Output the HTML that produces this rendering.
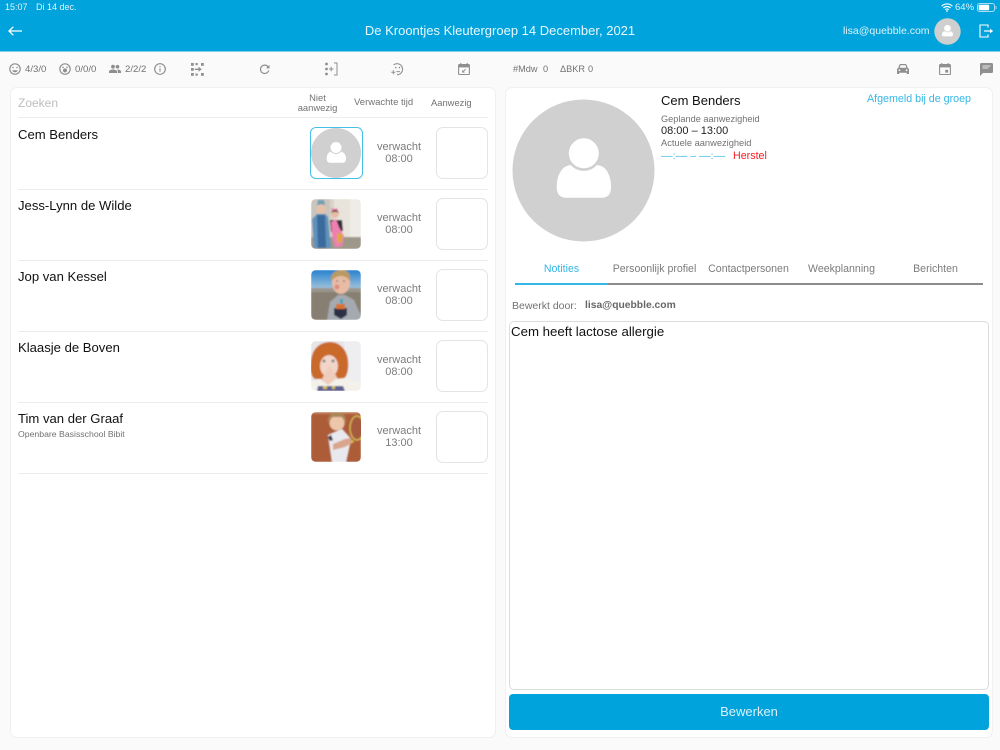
<!DOCTYPE html>
<html lang="nl"><head><meta charset="utf-8"><title>De Kroontjes Kleutergroep</title>
<style>
*{box-sizing:border-box}
html,body{margin:0;padding:0}
body{width:1000px;height:750px;position:relative;overflow:hidden;background:#fafafa;font-family:"Liberation Sans",sans-serif;color:#111}
.a{position:absolute;white-space:nowrap;line-height:1}
.g{color:#727272}
svg{position:absolute;display:block}
.card{position:absolute;background:#fff;border:1px solid #f0f0f0;border-radius:7px}
.line{position:absolute;left:18px;width:470px;height:1px;background:#ececec}
.box{position:absolute;left:436px;width:52px;height:52px;border:1.5px solid #e4e4e4;border-radius:7px;background:#fff}
.name{position:absolute;left:18px;font-size:13.1px;line-height:1;color:#111;white-space:nowrap}
.time{position:absolute;left:370px;width:58px;text-align:center;font-size:11px;line-height:12px;color:#7c7c7c}
.tab{position:absolute;top:263px;font-size:10.6px;line-height:12px;color:#7c7c7c;text-align:center;white-space:nowrap}
.ic{fill:none;stroke:#8f8f8f;stroke-width:1.2}
.s{font-size:9.6px;top:64.500px}
</style></head><body>

<div style="position:absolute;left:0;top:0;width:1000px;height:51px;background:#00a3dc"></div>
<div style="position:absolute;left:0;top:51px;width:1000px;height:1px;background:#7fd0ee"></div>
<div class="a" style="left:5px;top:3px;font-size:9px;color:#e2f4fb">15:07</div>
<div class="a" style="left:36px;top:3px;font-size:9px;color:#e2f4fb">Di 14 dec.</div>
<svg style="left:941px;top:3px" width="12" height="9" viewBox="0 0 12 9"><path d="M.6 3.200a7.600 7.600 0 0 1 10.800 0M2.400 5a5 5 0 0 1 7.200 0M4.200 6.700a2.500 2.500 0 0 1 3.600 0" fill="none" stroke="#fff" stroke-width="1.200"/><circle cx="6" cy="8" r=".9" fill="#fff"/></svg>
<div class="a" style="left:955px;top:2.500px;font-size:9.500px;color:#e2f4fb">64%</div>
<svg style="left:977px;top:3px" width="20" height="9" viewBox="0 0 20 9"><rect x=".5" y=".5" width="17" height="8" rx="2.200" fill="none" stroke="#a8def2"/><rect x="1.700" y="1.700" width="10.500" height="5.600" rx="1" fill="#fff"/><rect x="18.500" y="3" width="1" height="3" fill="#a8def2"/></svg>
<svg style="left:7px;top:24px" width="16" height="14" viewBox="0 0 16 14"><path d="M15 7H2M6.300 2.800 2 7l4.300 4.200" fill="none" stroke="#fff" stroke-width="1.300"/></svg>
<div class="a" style="left:0;top:24px;width:1000px;text-align:center;font-size:13px;color:#eaf8fd">De Kroontjes Kleutergroep 14 December, 2021</div>
<div class="a" style="left:843px;top:25.500px;font-size:10.500px;color:#dff3fb">lisa@quebble.com</div>
<svg style="left:934px;top:18px" width="27" height="27" viewBox="0 0 27 27"><circle cx="13.500" cy="13.500" r="13.200" fill="#cfcfcf"/><path d="M8 16.500c0-2.200 1.300-3.300 2.800-3.300h5.400c1.500 0 2.800 1.100 2.800 3.300 0 1.300-.6 1.900-1.700 1.900H9.700C8.600 18.400 8 17.800 8 16.500z" fill="#fff"/><circle cx="13.500" cy="10.300" r="3.700" fill="#fff" stroke="#cfcfcf" stroke-width=".7"/></svg>
<svg style="left:979px;top:24px" width="15" height="14" viewBox="0 0 15 14"><path d="M9 3.500V1H1v12h8v-2.500" fill="none" stroke="#fff" stroke-width="1.100"/><path d="M5 7h7" stroke="#fff" stroke-width="1.200"/><path d="M11 4.800 14.200 7 11 9.200z" fill="#fff"/></svg>

<svg style="left:9px;top:63px" width="12" height="12" viewBox="0 0 12 12"><circle class="ic" cx="6" cy="6" r="5.200"/><circle cx="4" cy="4.500" r=".8" fill="#8f8f8f"/><circle cx="8" cy="4.500" r=".8" fill="#8f8f8f"/><path d="M3.300 7.200h5.400a2.800 2.800 0 0 1-5.400 0z" fill="#8f8f8f"/></svg>
<div class="a g s" style="left:25px">4/3/0</div>
<svg style="left:59px;top:63px" width="12" height="12" viewBox="0 0 12 12"><circle class="ic" cx="6" cy="6" r="5.200"/><circle cx="4" cy="4.300" r=".8" fill="#8f8f8f"/><circle cx="8" cy="4.300" r=".8" fill="#8f8f8f"/><circle cx="6" cy="7.400" r="2" fill="#8f8f8f"/></svg>
<div class="a g s" style="left:75px">0/0/0</div>
<svg style="left:109px;top:64px" width="12" height="10" viewBox="0 0 12 10"><circle cx="4" cy="2.700" r="1.900" fill="#8f8f8f"/><circle cx="8.500" cy="2.700" r="1.800" fill="#8f8f8f"/><path d="M0 9V7.600C0 6 2.500 5.500 4 5.500s4 .5 4 2.100V9zM8.800 9V7.400c0-.7-.3-1.300-.9-1.800h.8c1.300 0 3.300.5 3.300 1.900V9z" fill="#8f8f8f"/></svg>
<div class="a g s" style="left:125px">2/2/2</div>
<svg style="left:154px;top:63px" width="12" height="12" viewBox="0 0 12 12"><circle class="ic" cx="6" cy="6" r="5.300" stroke-width="1"/><path d="M6 5.200v3.600M6 3v1.200" stroke="#8f8f8f" stroke-width="1.100"/></svg>
<svg style="left:191px;top:63px" width="13" height="13" viewBox="0 0 13 13"><g fill="#8f8f8f"><rect x="0" y="0" width="2.800" height="2.800"/><rect x="0" y="5" width="2.800" height="2.800"/><rect x="0" y="10" width="2.800" height="2.800"/><rect x="4.500" y="0" width="2.200" height="2.200"/><rect x="4.500" y="10.500" width="2.200" height="2.200"/><rect x="10" y="0" width="2.800" height="2.800"/><rect x="10" y="10" width="2.800" height="2.800"/><path d="M3.800 5.600h3.700V3.800L10.800 6.300 7.500 8.800V7H3.800z"/></g></svg>
<svg style="left:259px;top:64px" width="11" height="11" viewBox="0 0 11 11"><path d="M9.300 3.200A4.200 4.200 0 1 0 9.700 6.500" fill="none" stroke="#8f8f8f" stroke-width="1.200"/><path d="M10.500.9v3.500H7z" fill="#8f8f8f"/></svg>
<svg style="left:325px;top:62px" width="13" height="14" viewBox="0 0 13 14"><g fill="#8f8f8f"><circle cx="1.500" cy="2" r="1.400"/><circle cx="1.500" cy="7" r="1.400"/><circle cx="1.500" cy="12" r="1.400"/><path d="M4 6.500h1.700V4.800h1v1.700h1.700v1H6.700v1.700h-1V7.500H4z"/></g><path d="M9 1h3v12H9" fill="none" stroke="#8f8f8f" stroke-width="1"/></svg>
<svg style="left:391px;top:62px" width="13" height="14" viewBox="0 0 13 14"><path d="M2.500 3A5.500 5.500 0 1 1 6 12.700" fill="none" stroke="#8f8f8f" stroke-width="1.100"/><circle cx="4.800" cy="5.600" r=".8" fill="#8f8f8f"/><circle cx="8.500" cy="5.600" r=".8" fill="#8f8f8f"/><path d="M5.500 9.200c1.100.7 2.300.7 3.300-.1" fill="none" stroke="#8f8f8f"/><path d="M2.300 8.300v4M.3 10.300h4" stroke="#8f8f8f"/></svg>
<svg style="left:458px;top:63px" width="12" height="12" viewBox="0 0 12 12"><path d="M2.800 0v2M9.200 0v2" stroke="#8f8f8f" stroke-width="1.100"/><rect x=".6" y="1.600" width="10.800" height="9.900" rx=".8" fill="none" stroke="#8f8f8f" stroke-width="1.100"/><rect x=".6" y="1.600" width="10.800" height="2.800" fill="#8f8f8f"/><path d="M7.600 6.200 4.800 9M4.600 7.300V9.200H6.500" fill="none" stroke="#8f8f8f" stroke-width=".9"/></svg>
<div class="a g" style="left:513px;top:64.500px;font-size:9.200px">#Mdw</div>
<div class="a g" style="left:543px;top:64.500px;font-size:9.200px">0</div>
<div class="a g" style="left:560px;top:64.500px;font-size:9.200px">ΔBKR</div>
<div class="a g" style="left:588px;top:64.500px;font-size:9.200px">0</div>
<svg style="left:897px;top:64px" width="12" height="10" viewBox="0 0 12 10"><path d="M1.200 4 2.300 1C2.500.4 3 0 3.700 0h4.600c.7 0 1.200.4 1.400 1l1.100 3c.7.200 1.200.9 1.200 1.600V10H9.800V8.800H2.200V10H0V5.600C0 4.900.5 4.200 1.200 4zm1.500-.2h6.600L8.500 1.300H3.500z" fill="#8f8f8f" fill-rule="evenodd"/><circle cx="2.400" cy="6.200" r=".9" fill="#fafafa"/><circle cx="9.600" cy="6.200" r=".9" fill="#fafafa"/></svg>
<svg style="left:939px;top:63px" width="12" height="12" viewBox="0 0 12 12"><path d="M2.800 0v2M9.200 0v2" stroke="#8f8f8f" stroke-width="1.100"/><rect x=".6" y="1.600" width="10.800" height="9.900" rx=".8" fill="none" stroke="#8f8f8f" stroke-width="1.100"/><rect x=".6" y="1.600" width="10.800" height="2.800" fill="#8f8f8f"/><rect x="6.300" y="6.800" width="2.800" height="2.800" fill="#8f8f8f"/></svg>
<svg style="left:980px;top:63px" width="13" height="13" viewBox="0 0 13 13"><path d="M1.300 0h10.400c.7 0 1.300.6 1.300 1.300v7.400c0 .7-.6 1.300-1.300 1.300H3L0 13V1.300C0 .6.600 0 1.300 0z" fill="#8f8f8f"/><path d="M2.500 3h8M2.500 5h6" stroke="#e8e8e8" stroke-width="1"/></svg>

<div class="card" style="left:10px;top:87px;width:486px;height:651px"></div>
<div class="a" style="left:18px;top:97px;font-size:12px;color:#bdbdbd">Zoeken</div>
<div class="a g" style="left:290px;top:92.500px;width:55px;text-align:center;font-size:9.400px;line-height:10.500px;white-space:normal">Niet<br>aanwezig</div>
<div class="a g" style="left:354px;top:97.500px;font-size:9.500px">Verwachte tijd</div>
<div class="a g" style="left:431px;top:97.500px;font-size:9.400px">Aanwezig</div>
<div class="line" style="top:117px"></div>
<div class="line" style="top:189px"></div>
<div class="line" style="top:260px"></div>
<div class="line" style="top:331px"></div>
<div class="line" style="top:402px"></div>
<div class="line" style="top:473px"></div>

<div class="name" style="top:128px">Cem Benders</div>
<div class="name" style="top:199px">Jess-Lynn de Wilde</div>
<div class="name" style="top:270px">Jop van Kessel</div>
<div class="name" style="top:341px">Klaasje de Boven</div>
<div class="name" style="top:412px">Tim van der Graaf</div>
<div class="a g" style="left:18px;top:430px;font-size:8.700px">Openbare Basisschool Bibit</div>

<div style="position:absolute;left:310px;top:127px;width:53px;height:52px;border:1.300px solid #45c0e8;border-radius:6px;background:#fff"></div>
<svg style="left:311px;top:128px" width="50" height="50" viewBox="0 0 50 50"><circle cx="25" cy="25" r="25" fill="#d0d0d0"/><path d="M15.700 30.500c0-4.500 2.500-7 5-7h8.600c2.500 0 5.700 2.500 5.700 7 0 3-1.200 4.200-3.300 4.200H19c-2.100 0-3.300-1.200-3.300-4.200z" fill="#fff"/><circle cx="25" cy="19.500" r="6" fill="#fff" stroke="#d0d0d0"/></svg>

<svg style="left:311px;top:199px" width="50" height="50" viewBox="0 0 50 50"><defs><filter id="b" x="-10%" y="-10%" width="120%" height="120%"><feGaussianBlur stdDeviation=".8"/></filter><clipPath id="c"><rect width="50" height="50" rx="5"/></clipPath></defs><g clip-path="url(#c)"><g filter="url(#b)"><rect width="50" height="50" fill="#e8e4dc"/><rect x="0" width="20" height="40" fill="#c9c4bc"/><rect x="39" width="11" height="38" fill="#efece7"/><rect x="19" width="4" height="40" fill="#d8d3cb"/><rect y="38" width="50" height="12" fill="#a0978b"/><path d="M7 1h6l1 5H6z" fill="#6f9fb4"/><circle cx="10" cy="10" r="4.700" fill="#e6c2aa"/><path d="M6 15h8l3 3 3 31H3L1 20z" fill="#5f92bc"/><path d="M6 16h8l1 33H7z" fill="#3a6a9c"/><path d="M20 9l3 1 3-1 1 3h-6z" fill="#ea6fa8"/><circle cx="24" cy="15" r="4" fill="#e6bca6"/><path d="M20 14c1-4 7-4 8 0l-2-1h-4z" fill="#6e4d3e"/><path d="M19 21h12l1 11-12 1z" fill="#322d35"/><path d="M20 23l5-3 3 8 5 9-2 10-7 1-3-12z" fill="#ee7fb0"/><path d="M26 34l6 1-1 8-5 1z" fill="#e0a44c"/></g></g></svg>

<svg style="left:311px;top:270px" width="50" height="50" viewBox="0 0 50 50"><defs><clipPath id="c2"><rect width="50" height="50" rx="5"/></clipPath><linearGradient id="s" x1="0" y1="0" x2="0" y2="1"><stop offset="0" stop-color="#2680d0"/><stop offset="1" stop-color="#a8c8dc"/></linearGradient></defs><g clip-path="url(#c2)"><g filter="url(#b)"><rect width="50" height="20" fill="url(#s)"/><rect y="18" width="50" height="32" fill="#877f72"/><rect y="18" width="50" height="4" fill="#9a958c"/><path d="M16 50l3-18 8-7h7l9 5 7 16v4z" fill="#a5aab0"/><ellipse cx="30" cy="13" rx="9" ry="11" fill="#e8bca4"/><path d="M20 11c-1-8 5-11 11-11 6 0 9 4 8 11-2-3-5-5-9-5-4 0-7 2-10 5z" fill="#b99a62"/><circle cx="26" cy="17" r="2.500" fill="#dc8c80"/><circle cx="33" cy="11" r=".8" fill="#45506a"/><circle cx="26" cy="11" r=".8" fill="#45506a"/><path d="M23 38h13v7l-6 4-7-4z" fill="#2d2f44"/><path d="M25 34h9v5h-9z" fill="#d9722e"/><path d="M29 29h3v5h-3z" fill="#3aa6c0"/></g></g></svg>

<svg style="left:311px;top:341px" width="50" height="50" viewBox="0 0 50 50"><defs><clipPath id="c3"><rect width="50" height="50" rx="5"/></clipPath></defs><g clip-path="url(#c3)"><g filter="url(#b)"><rect width="50" height="50" fill="#e6e6e8"/><path d="M33 0h17v50H33z" fill="#eeeef0"/><path d="M0 22C0 8 9 1 19 1c10 0 17 8 18 18 1 9-1 19-6 19H4C0 36-1 28 0 22z" fill="#c9692a"/><ellipse cx="18" cy="25" rx="9" ry="11" fill="#f2d5c8"/><circle cx="13" cy="20" r="1.500" fill="#7b8193"/><circle cx="22" cy="20" r="1.500" fill="#7b8193"/><path d="M11 38l6-12 3 0 7 12 5 4-5 4H8l-5-3z" fill="#efcdbd"/><path d="M0 40l9-2 8 6 8-6 8-1 17 5v8H0z" fill="#f3f1ea"/><path d="M7 45h25l2 5H6z" fill="#5f6190"/><path d="M12 45h4v3h-4zM21 45h3v3h-3z" fill="#d6bf4e"/></g></g></svg>

<svg style="left:311px;top:412px" width="50" height="50" viewBox="0 0 50 50"><defs><clipPath id="c4"><rect width="50" height="50" rx="5"/></clipPath></defs><g clip-path="url(#c4)"><g filter="url(#b)"><rect width="50" height="50" fill="#ad5c39"/><rect y="0" width="50" height="2" fill="#c07d5c"/><ellipse cx="46" cy="16" rx="7" ry="12" fill="#a55a3d" stroke="#d8c158" stroke-width="1.200"/><path d="M36 31l6-3 1 2-6 3z" fill="#e0c34a"/><path d="M17 23l14-6 9 10-5 23H21z" fill="#e8e9ee"/><circle cx="26" cy="11" r="7.500" fill="#eec6aa"/><path d="M17 11c-1-7 4-11 9-11s10 4 9 11c-2-3-3-6-5-6h-7c-3 0-5 3-6 6z" fill="#a98752"/><path d="M22 32l12-5 6-1 1 5-7 4-12 3z" fill="#d9a58c"/><path d="M17 25l3-2 2 5-3 1z" fill="#32384c"/></g></g></svg>

<div class="time" style="top:141px">verwacht<br>08:00</div>
<div class="time" style="top:212px">verwacht<br>08:00</div>
<div class="time" style="top:283px">verwacht<br>08:00</div>
<div class="time" style="top:354px">verwacht<br>08:00</div>
<div class="time" style="top:425px">verwacht<br>13:00</div>
<div class="box" style="top:127px"></div>
<div class="box" style="top:198px"></div>
<div class="box" style="top:269px"></div>
<div class="box" style="top:340px"></div>
<div class="box" style="top:411px"></div>

<div class="card" style="left:505px;top:87px;width:488px;height:651px"></div>
<svg style="left:512px;top:99px" width="143" height="143" viewBox="0 0 143 143"><circle cx="71.500" cy="71.500" r="71" fill="#d0d0d0"/><path d="M44.700 88C44.700 76 50 66 60 66h24c10 0 15 10 15 22 0 7-3 10.700-9 10.700H54c-6 0-9.300-3.700-9.300-10.700z" fill="#fff"/><circle cx="71.800" cy="54.300" r="16.300" fill="#fff" stroke="#d0d0d0" stroke-width="2.600"/></svg>
<div class="a" style="left:661px;top:94px;font-size:13px;color:#111">Cem Benders</div>
<div class="a" style="left:867px;top:94px;font-size:10.700px;color:#35b7e6">Afgemeld bij de groep</div>
<div class="a g" style="left:661px;top:115px;font-size:9.200px">Geplande aanwezigheid</div>
<div class="a" style="left:661px;top:126px;font-size:11px;color:#222">08:00 – 13:00</div>
<div class="a g" style="left:661px;top:139px;font-size:9.300px">Actuele aanwezigheid</div>
<div class="a" style="left:661px;top:151px;font-size:10.500px;color:#35b7e6">––:–– – ––:––</div>
<div class="a" style="left:733px;top:151px;font-size:10.700px;color:#fb1c24">Herstel</div>

<div class="tab" style="left:515px;width:93px;color:#35b7e6">Notities</div>
<div class="tab" style="left:608px;width:93px">Persoonlijk profiel</div>
<div class="tab" style="left:702px;width:93px">Contactpersonen</div>
<div class="tab" style="left:795px;width:93px">Weekplanning</div>
<div class="tab" style="left:889px;width:93px">Berichten</div>
<div style="position:absolute;left:515px;top:283px;width:468px;height:2px;background:#8c8c8c"></div>
<div style="position:absolute;left:515px;top:283px;width:93px;height:2px;background:#35b7e6"></div>
<div class="a g" style="left:512px;top:300.500px;font-size:10.500px">Bewerkt door:</div>
<div class="a" style="left:585px;top:300.500px;font-size:10.300px;font-weight:bold;color:#666">lisa@quebble.com</div>
<div style="position:absolute;left:509px;top:321px;width:480px;height:369px;border:1px solid #dcdcdc;border-radius:5px;background:#fff"></div>
<div class="a" style="left:511px;top:325px;font-size:13.250px;color:#111">Cem heeft lactose allergie</div>
<div style="position:absolute;left:509px;top:694px;width:480px;height:36px;border-radius:4px;background:#00a3dc;color:#d8f1fa;font-size:13px;line-height:36px;text-align:center">Bewerken</div>
</body></html>
